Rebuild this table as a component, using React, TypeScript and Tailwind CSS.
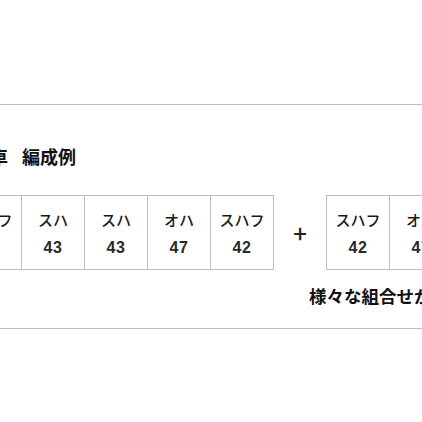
import React from 'react';

const firstSet = [
  { name: 'スハフ', no: '42' },
  { name: 'スハ', no: '43' },
  { name: 'スハ', no: '43' },
  { name: 'オハ', no: '47' },
  { name: 'スハフ', no: '42' },
];

const secondSet = [
  { name: 'スハフ', no: '42' },
  { name: 'オハ', no: '47' },
  { name: 'スハ', no: '43' },
];

function Car({ name, no }: { name: string; no: string }) {
  return (
    <div className="w-[63px] h-[73px] shrink-0 border-r border-[#bdbdbd] flex flex-col items-center justify-center text-[15px] font-medium text-[#1a1a1a]">
      <span className="leading-[27px] mt-[1px]">{name}</span>
      <span className="leading-[27px] pt-[1px] text-[16px] font-['Liberation_Sans',sans-serif] font-bold text-[#2a2a2a] tracking-[0.5px]">{no}</span>
    </div>
  );
}

export default function App() {
  return (
    <div className="w-[422px] h-[422px] overflow-hidden bg-white font-['Noto_Sans_CJK_JP','Noto_Sans',sans-serif] text-[#111]">
      <div className="pt-[104px]">
        <section className="border-t border-b border-[#bdbdbd] pb-[22px]">
          {/* heading, cut at the left edge */}
          <h2 className="mt-[42px] ml-[-28px] whitespace-nowrap text-[18px] leading-[18px] font-bold">
            客車<span className="ml-[14px]">編成例</span>
          </h2>

          {/* car rows */}
          <div className="mt-[30px] ml-[-42px] flex items-center whitespace-nowrap">
            <div className="flex border-l border-t border-b border-[#bdbdbd]">
              {firstSet.map((c, i) => (
                <Car key={i} {...c} />
              ))}
            </div>
            <div className="w-[52px] shrink-0 text-center text-[24px] leading-none font-medium text-[#222]">+</div>
            <div className="flex border-l border-t border-b border-[#bdbdbd]">
              {secondSet.map((c, i) => (
                <Car key={i} {...c} />
              ))}
            </div>
          </div>

          <p className="mt-[16px] pl-[309px] whitespace-nowrap text-[17.5px] leading-[20px] font-bold">
            様々な組合せができます
          </p>
        </section>
      </div>
    </div>
  );
}
